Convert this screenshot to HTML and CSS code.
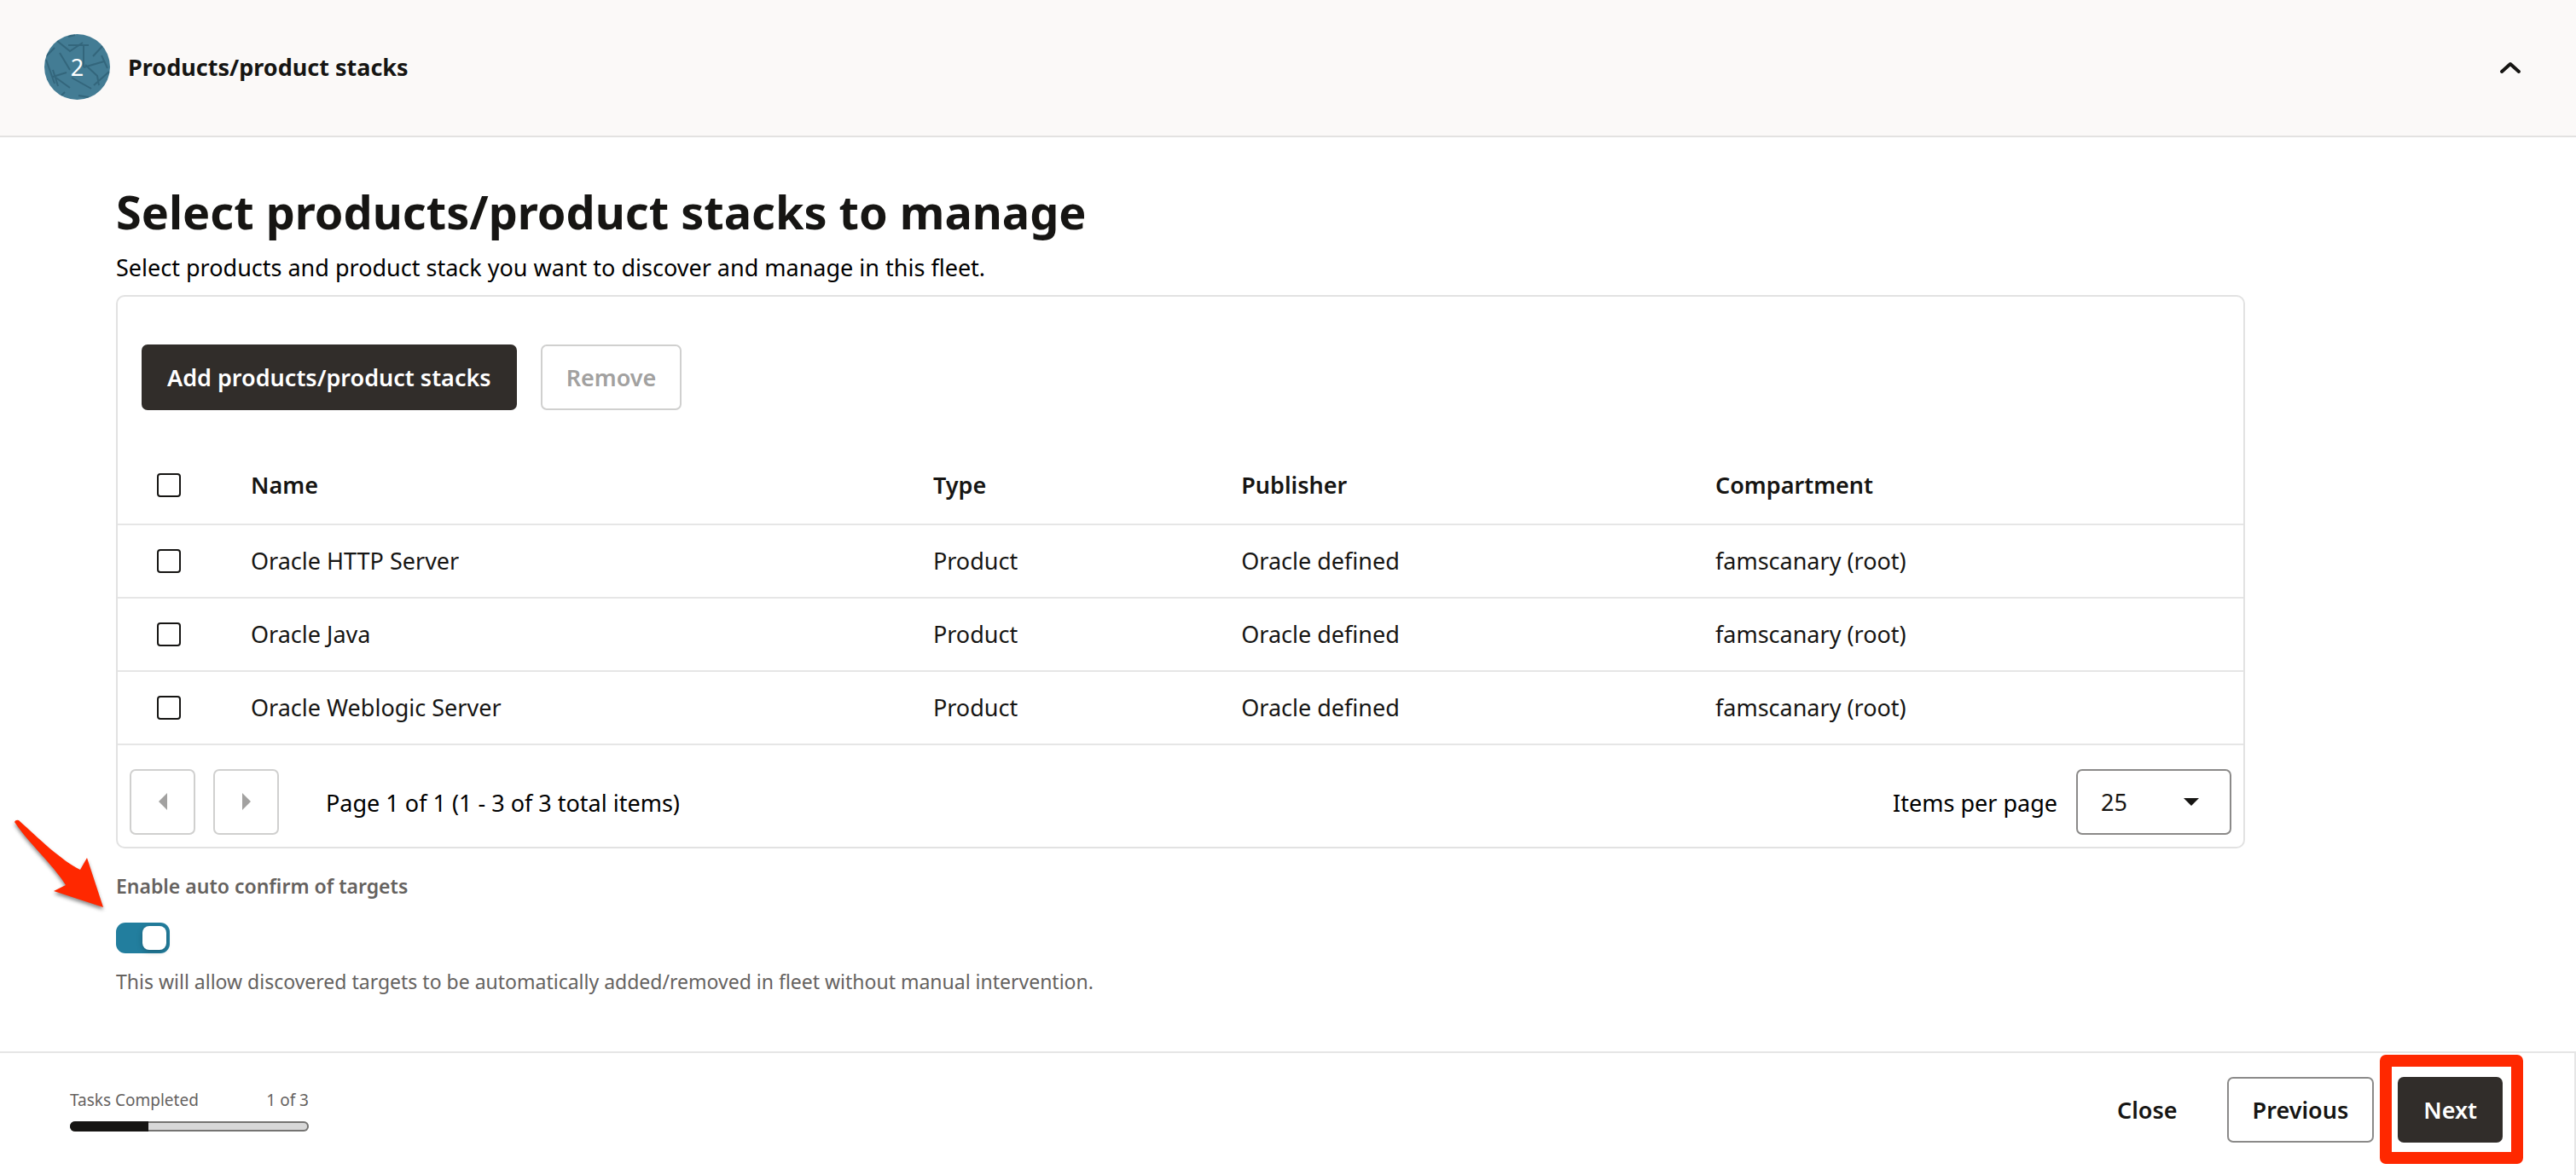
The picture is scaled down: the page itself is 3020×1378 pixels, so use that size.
FILE: index.html
```html
<!DOCTYPE html>
<html lang="en">
<head>
  <meta charset="utf-8">
  <meta name="viewport" content="width=device-width, initial-scale=1">
  <title>Products/product stacks</title>
  <link rel="stylesheet" href="styles.css">
</head>
<body>
  <header class="step-header">
    <div class="step-badge">
      <svg class="step-pattern" viewBox="0 0 77 77" aria-hidden="true">
        <path d="M15 8 30 20 45 10M28 13H52M46 13V39M57 26 70 12M18 22 30 42M46 39 70 32M48 36 62 49 64 60M67 25 74 40M2 30 12 58M2 26 12 16M10 50 26 45M10 42 16 61M12 50 30 63M32 51 55 64M76 44 58 60M28 3 36 1M18 74 24 68M40 72 52 74"/>
      </svg>
      <span class="step-number">2</span>
    </div>
    <h2 class="step-title">Products/product stacks</h2>
    <button class="collapse" type="button" aria-label="Collapse section">
      <svg width="28" height="18" viewBox="0 0 28 18" aria-hidden="true"><path d="M4 14 14 5 24 14"/></svg>
    </button>
  </header>

  <main class="content">
    <h1 class="page-title">Select products/product stacks to manage</h1>
    <p class="intro">Select products and product stack you want to discover and manage in this fleet.</p>

    <section class="card">
      <div class="toolbar">
        <button class="btn btn-primary" type="button">Add products/product stacks</button>
        <button class="btn btn-disabled" type="button" disabled>Remove</button>
      </div>

      <table class="products">
        <colgroup>
          <col class="col-check"><col class="col-name"><col class="col-type"><col class="col-publisher"><col>
        </colgroup>
        <thead>
          <tr>
            <th class="check"><input type="checkbox" aria-label="Select all"></th>
            <th>Name</th><th>Type</th><th>Publisher</th><th>Compartment</th>
          </tr>
        </thead>
        <tbody>
          <tr>
            <td class="check"><input type="checkbox" aria-label="Select Oracle HTTP Server"></td>
            <td>Oracle HTTP Server</td><td>Product</td><td>Oracle defined</td><td>famscanary (root)</td>
          </tr>
          <tr>
            <td class="check"><input type="checkbox" aria-label="Select Oracle Java"></td>
            <td>Oracle Java</td><td>Product</td><td>Oracle defined</td><td>famscanary (root)</td>
          </tr>
          <tr>
            <td class="check"><input type="checkbox" aria-label="Select Oracle Weblogic Server"></td>
            <td>Oracle Weblogic Server</td><td>Product</td><td>Oracle defined</td><td>famscanary (root)</td>
          </tr>
        </tbody>
      </table>

      <div class="pagination">
        <div class="pager">
          <button class="page-btn" type="button" aria-label="Previous page" disabled>
            <svg width="21" height="21" viewBox="0 0 21 21" aria-hidden="true"><path d="M16 0V20L6 10Z"/></svg>
          </button>
          <button class="page-btn" type="button" aria-label="Next page" disabled>
            <svg width="21" height="21" viewBox="0 0 21 21" aria-hidden="true"><path d="M6 0 16 10 6 20Z"/></svg>
          </button>
        </div>
        <span class="page-info">Page 1 of 1 (1 - 3 of 3 total items)</span>
        <label class="per-page-label" for="per-page">Items per page</label>
        <div class="select-box">
          <select id="per-page"><option selected>25</option><option>50</option><option>100</option></select>
          <svg class="caret" width="18" height="9" viewBox="0 0 18 9" aria-hidden="true"><path d="M0 0H18L9 9Z"/></svg>
        </div>
      </div>
    </section>

    <div class="confirm">
      <svg class="pointer" width="116" height="114" viewBox="0 0 116 114" aria-hidden="true">
        <path d="M3 6Q4 3 8 4C32 26 58 51 80 62L88 48 107 106 49 87 63 80C49 57 18 29 3 6Z"/>
      </svg>
      <label class="confirm-label" for="auto-confirm">Enable auto confirm of targets</label>
      <input class="switch" id="auto-confirm" type="checkbox" role="switch" aria-describedby="confirm-help" checked>
      <p class="confirm-help" id="confirm-help">This will allow discovered targets to be automatically added/removed in fleet without manual intervention.</p>
    </div>
  </main>

  <footer class="footer">
    <div class="tasks">
      <div class="tasks-text"><span>Tasks Completed</span><span>1 of 3</span></div>
      <div class="progress" role="progressbar" aria-label="Tasks completed" aria-valuemin="0" aria-valuemax="3" aria-valuenow="1">
        <div class="progress-fill" style="width: 33%"></div>
      </div>
    </div>
    <div class="actions">
      <button class="btn btn-plain" type="button">Close</button>
      <button class="btn btn-outline" type="button">Previous</button>
      <div class="highlight"><button class="btn btn-primary" type="button">Next</button></div>
    </div>
  </footer>
</body>
</html>
```
FILE: styles.css
```css
* {
  box-sizing: border-box;
}

body {
  display: flex;
  flex-direction: column;
  min-height: 100vh;
  margin: 0;
  background: #fff;
  color: #000;
  font: 400 27px/36px "Noto Sans", "Open Sans", sans-serif;
}

h1, h2, p {
  margin: 0;
}

button, select {
  font: inherit;
}

/* Step header */
.step-header {
  display: flex;
  align-items: center;
  gap: 21px;
  padding: 40px 60px 42px 52px;
  border-bottom: 2px solid #e3e2e1;
  background: #fbf9f8;
}

.step-badge {
  display: grid;
  place-items: center;
  width: 77px;
  height: 77px;
  border-radius: 50%;
  overflow: hidden;
  background: #437c94;
  color: #fff;
}

.step-pattern, .step-number {
  grid-area: 1 / 1;
}

.step-pattern path {
  fill: none;
  stroke: #2f6075;
  stroke-width: 2;
  opacity: .8;
}

.step-number {
  z-index: 1;
}

.step-title {
  flex: 1;
  color: #161513;
  font-size: 27px;
  font-weight: 700;
}

.collapse {
  display: flex;
  padding: 3px;
  border: 0;
  background: none;
}

.collapse path {
  fill: none;
  stroke: #161513;
  stroke-width: 4;
  stroke-linecap: round;
  stroke-linejoin: round;
}

/* Content */
.content {
  flex: 1;
  width: 100%;
  max-width: 2768px;
  padding: 55px 136px 66px;
}

.page-title {
  margin-bottom: 16px;
  color: #161513;
  font-size: 54px;
  line-height: 64px;
}

.intro {
  margin-bottom: 14px;
}

.card {
  border: 2px solid #e2e2e2;
  border-radius: 10px;
}

.toolbar {
  display: flex;
  gap: 28px;
  padding: 56px 28px 43px;
}

.btn {
  height: 77px;
  padding: 0 28px;
  border: 2px solid transparent;
  border-radius: 7px;
  background: transparent;
  color: #161513;
  font-weight: 600;
  white-space: nowrap;
}

.btn-primary {
  border-color: #312d2a;
  background: #312d2a;
  color: #fff;
}

.btn-outline {
  border-color: #8b8a89;
}

.btn-disabled {
  border-color: #d0d0cf;
  color: #a2a1a0;
}

.products {
  width: 100%;
  table-layout: fixed;
  border-spacing: 0;
  color: #161513;
}

.col-check {
  width: 140px;
}

.col-name {
  width: 32.1%;
}

.col-type {
  width: 14.5%;
}

.col-publisher {
  width: 22.3%;
}

.products th, .products td {
  height: 86px;
  padding: 0 16px;
  border-bottom: 2px solid #e6e6e6;
  text-align: left;
}

.products th {
  height: 92px;
  font-weight: 600;
}

.products .check {
  padding-left: 46px;
}

.check input {
  display: block;
  width: 28px;
  height: 28px;
  margin: 0;
  appearance: none;
  border: 2px solid #161513;
  border-radius: 4px;
}

.pagination {
  display: flex;
  align-items: center;
  padding: 28px 14px 14px;
}

.pager {
  display: flex;
  gap: 21px;
}

.page-btn {
  display: grid;
  place-items: center;
  width: 77px;
  height: 77px;
  padding: 0;
  border: 2px solid #d0d0cf;
  border-radius: 7px;
  background: #fff;
  fill: #a2a1a0;
}

.page-info {
  flex: 1;
  padding: 3px 0 0 55px;
}

.per-page-label {
  padding: 3px 22px 0 0;
}

.select-box {
  display: grid;
  align-items: center;
  width: 182px;
  height: 77px;
}

.select-box select, .caret {
  grid-area: 1 / 1;
}

.select-box select {
  width: 100%;
  height: 100%;
  padding: 0 27px;
  appearance: none;
  border: 2px solid #8b8a89;
  border-radius: 7px;
  background: #fff;
  color: #161513;
}

.caret {
  justify-self: end;
  margin-right: 38px;
  fill: #161513;
  pointer-events: none;
}

/* Auto confirm switch */
.confirm {
  position: relative;
  display: flex;
  flex-direction: column;
  align-items: flex-start;
  padding-top: 28px;
  color: #65625f;
  font-size: 23px;
  line-height: 32px;
}

.confirm-label {
  font-weight: 600;
}

.switch {
  width: 63px;
  height: 36px;
  margin: 27px 0 17px;
  padding: 4px;
  appearance: none;
  border-radius: 11px;
  background: #227e9e;
}

.switch::before {
  content: "";
  display: block;
  width: 28px;
  height: 28px;
  border-radius: 8px;
  background: #fff;
  box-shadow: 0 2px 6px rgba(0, 0, 0, .25);
}

.switch:checked::before {
  margin-left: auto;
}

.pointer {
  position: absolute;
  top: -37px;
  left: -122px;
  fill: #ff2800;
  filter: drop-shadow(0 3px 2px rgba(0, 0, 0, .45));
}

/* Footer */
.footer {
  display: flex;
  align-items: center;
  justify-content: space-between;
  padding: 28px 84px 38px 82px;
  border: solid #e6e6e6;
  border-width: 2px 2px 0 0;
}

.tasks {
  width: 280px;
  color: #65625f;
  font-size: 19px;
  line-height: 26px;
}

.tasks-text {
  display: flex;
  justify-content: space-between;
  margin-bottom: 12px;
}

.progress {
  height: 12px;
  overflow: hidden;
  border-radius: 6px;
  background: #d8d8d8;
  box-shadow: inset 0 0 0 2px #757472;
}

.progress-fill {
  height: 100%;
  background: #161513;
}

.actions {
  display: flex;
  gap: 28px;
}

.highlight {
  position: relative;
}

.highlight::after {
  content: "";
  position: absolute;
  inset: -26px -24px -25px -21px;
  border: 14px solid #ff2800;
  border-radius: 7px;
  pointer-events: none;
}
```
